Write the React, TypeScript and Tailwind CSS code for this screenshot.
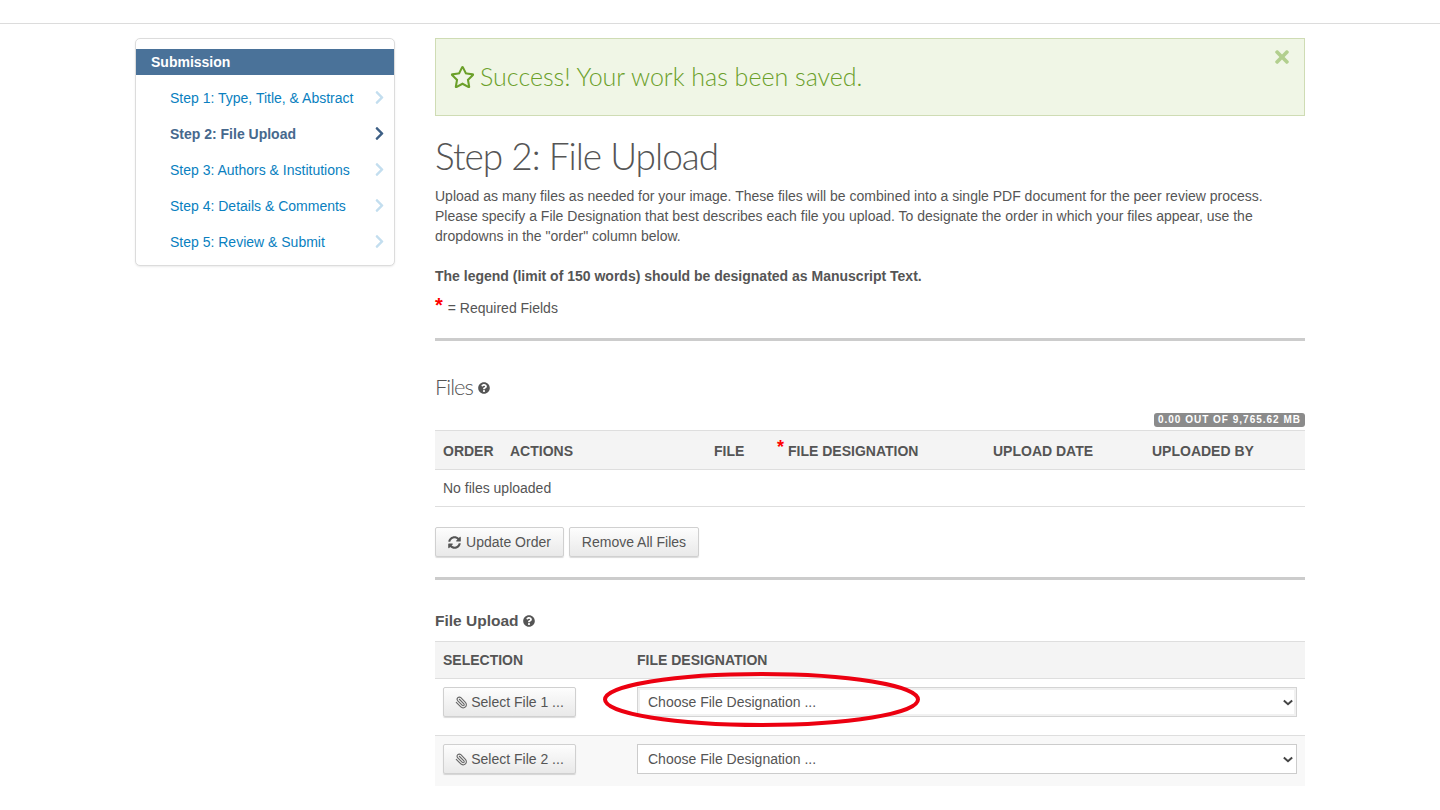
import { Paperclip } from "lucide-react";
import { FaChevronRight, FaQuestionCircle, FaRegStar, FaSyncAlt, FaTimes } from "react-icons/fa";

const steps = [
  { label: "Step 1: Type, Title, & Abstract" },
  { label: "Step 2: File Upload", active: true },
  { label: "Step 3: Authors & Institutions" },
  { label: "Step 4: Details & Comments" },
  { label: "Step 5: Review & Submit" },
];

const Sidebar = () => (
  <aside className="w-[260px] h-[228px] shrink-0 rounded-[5px] border border-[#dcdcdc] bg-white pt-[10px] shadow-[0_1px_2px_rgba(0,0,0,0.08)]">
    <div className="h-[26px] bg-[#4a7299] pl-[15px] text-[14px] leading-[26px] font-bold text-white">Submission</div>
    <ul className="pt-[5px]">
      {steps.map((step) => (
        <li key={step.label} className="flex h-[36px] items-center justify-between pl-[34px] pr-[9px]">
          <span className={step.active ? "text-[14px] font-bold text-[#46688d]" : "text-[14px] text-[#0a7fc0]"}>{step.label}</span>
          <FaChevronRight className={step.active ? "-mt-[2px] h-[15px] w-[11px] text-[#3d5f85]" : "-mt-[2px] h-[15px] w-[11px] text-[#c3deef]"} />
        </li>
      ))}
    </ul>
  </aside>
);

const Alert = () => (
  <div className="relative flex h-[78px] items-center border border-[#cfdcb4] bg-[#f0f6e6] pl-[14px] text-[#6ba02a]">
    <FaRegStar className="mr-[5px] h-[24px] w-[25px]" />
    <span className="font-['Lato'] text-[25px] font-light">Success! Your work has been saved.</span>
    <FaTimes className="absolute right-[15px] top-[8px] h-[20px] w-[14px] text-[#b2cf8e]" />
  </div>
);

const Button = ({ children, className }: { children: React.ReactNode; className: string }) => (
  <button className={`flex h-[30px] items-center justify-center rounded-[2px] border border-[#d0d0d0] bg-gradient-to-b from-[#fdfdfd] to-[#e9e9e9] text-[14px] text-[#555] shadow-[0_1px_1px_rgba(0,0,0,0.15)] ${className}`}>
    {children}
  </button>
);

const Th = ({ children, className }: { children: React.ReactNode; className: string }) => (
  <th className={`text-left text-[14px] font-bold uppercase text-[#555] ${className}`}>{children}</th>
);

const Select = ({ focused }: { focused?: boolean }) => (
  <div className={focused ? "relative flex h-[30px] w-[660px] items-center border border-[#d4d4d4] bg-white pl-[10px] text-[14px] text-[#555] shadow-[inset_0_0_0_2px_#f1f1f1]" : "relative flex h-[30px] w-[660px] items-center border border-[#ccc] bg-white pl-[10px] text-[14px] text-[#555]"}>
    Choose File Designation ...
    <svg viewBox="0 0 12 8" className="absolute right-[3px] top-[11px] h-[7px] w-[10px]">
      <path d="M1 1.5 6 6l5-4.5" fill="none" stroke="#444" strokeWidth="2.4" />
    </svg>
  </div>
);

const App = () => (
  <div className="relative h-[810px] overflow-hidden bg-white font-['Liberation_Sans',sans-serif] text-[#555]">
    <div className="h-[24px] border-b border-[#dcdcdc]" />
    <div className="flex gap-[40px] pl-[135px] pt-[14px]">
      <Sidebar />
      <main className="w-[870px]">
        <Alert />
        <h1 className="mt-[18px] font-['Lato'] text-[37px] leading-[44px] tracking-[-1px] font-light text-[#555]">Step 2: File Upload</h1>
        <p className="mt-[8px] text-[14px] leading-[20px]">
          Upload as many files as needed for your image. These files will be combined into a single PDF document for the peer review process. Please specify a File Designation that best describes each file you upload. To designate the order in which your files appear, use the dropdowns in the "order" column below.
        </p>
        <p className="mt-[20px] text-[14px] leading-[20px] font-bold">The legend (limit of 150 words) should be designated as Manuscript Text.</p>
        <p className="mt-[12px] flex h-[20px] items-center text-[14px]">
          <span className="mr-[5px] -mt-[6px] text-[20px] font-bold text-[#f00]">*</span>= Required Fields
        </p>
        <div className="mt-[20px] h-[3px] bg-[#ccc]" />

        <h2 className="mt-[32px] flex items-center font-['Lato'] text-[22px] leading-[28px] tracking-[-1px] font-light">
          Files
          <FaQuestionCircle className="ml-[5px] mt-[2px] h-[12px] w-[12px] text-[#555]" />
        </h2>
        <div className="mb-[3px] mt-[12px] flex justify-end">
          <span className="h-[14px] rounded-[3px] bg-[#8b8b8b] px-[4px] text-[10px] leading-[14px] font-bold tracking-[1px] text-white">0.00 OUT OF 9,765.62 MB</span>
        </div>
        <table className="w-full border-collapse">
          <thead>
            <tr className="h-[39px] border-y border-[#dedede] bg-[#f4f4f4]">
              <Th className="w-[75px] pl-[8px] pt-[2px]">Order</Th>
              <Th className="w-[204px] pt-[2px]">Actions</Th>
              <Th className="w-[63px] pt-[2px]">File</Th>
              <Th className="w-[216px] pt-[2px]">
                <span className="relative -top-[3px] mr-[4px] text-[18px] leading-[14px] text-[#f00]">*</span>File Designation
              </Th>
              <Th className="w-[159px] pt-[2px]">Upload Date</Th>
              <Th className="pt-[2px]">Uploaded By</Th>
            </tr>
          </thead>
          <tbody>
            <tr className="h-[37px] border-b border-[#dedede]">
              <td colSpan={6} className="pl-[8px] text-[14px]">No files uploaded</td>
            </tr>
          </tbody>
        </table>
        <div className="mt-[20px] flex gap-[5px]">
          <Button className="w-[129px] gap-[5px]">
            <FaSyncAlt className="h-[13px] w-[13px]" /> Update Order
          </Button>
          <Button className="w-[130px]">Remove All Files</Button>
        </div>
        <div className="mt-[20px] h-[3px] bg-[#ccc]" />

        <h3 className="mt-[31px] flex items-center text-[15.5px] leading-[20px] font-bold text-[#555]">
          File Upload
          <FaQuestionCircle className="ml-[4px] h-[12px] w-[12px] text-[#555]" />
        </h3>
        <table className="mt-[10px] w-full border-collapse">
          <thead>
            <tr className="h-[37px] border-y border-[#dedede] bg-[#f4f4f4]">
              <Th className="w-[202px] pl-[8px]">Selection</Th>
              <Th className="">File Designation</Th>
            </tr>
          </thead>
          <tbody>
            {[1, 2].map((n) => (
              <tr key={n} className={n === 1 ? "h-[57px] border-b border-[#dedede]" : "h-[50px] bg-[#f8f8f8]"}>
                <td className="pl-[8px] pt-[8px] align-top">
                  <Button className="w-[133px] gap-[3px]">
                    <Paperclip className="h-[13px] w-[13px] -scale-x-100 text-[#666]" strokeWidth={2} /> Select File {n} ...
                  </Button>
                </td>
                <td className="pt-[8px] align-top"><Select focused={n === 1} /></td>
              </tr>
            ))}
          </tbody>
        </table>
      </main>
    </div>
    <svg viewBox="0 0 320 56" className="absolute left-[602px] top-[672px] h-[56px] w-[320px]">
      <ellipse cx="159.5" cy="27.5" rx="156.5" ry="25.5" fill="none" stroke="#ec0010" strokeWidth="4" />
    </svg>
  </div>
);

export default App;
